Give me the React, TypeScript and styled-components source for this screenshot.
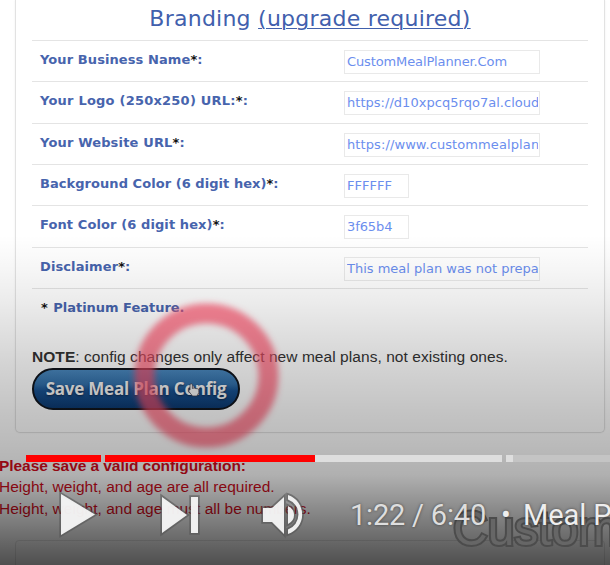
import React from 'react';
import styled, { createGlobalStyle } from 'styled-components';

const Global = createGlobalStyle`
  * { box-sizing: border-box; }
  body { margin: 0; background: #fff; overflow: hidden; }
`;

const Stage = styled.div`
  position: relative;
  width: 610px;
  height: 565px;
  overflow: hidden;
  background: #fff;
  font-family: "DejaVu Sans", Verdana, sans-serif;
  white-space: nowrap;
`;

const Page = styled.main`
  display: flex;
  flex-direction: column;
  width: 610px;
  height: 565px;
`;

const Panel = styled.section`
  height: 433px;
  width: 590px;
  margin-left: 15px;
  padding: 0 16px;
  border: 1px solid #e2e2e2;
  border-top: 0;
  border-radius: 0 0 5px 5px;
  box-shadow: 0 0 2px #ececec;
  flex: none;
`;

const Heading = styled.h1`
  margin: 0;
  height: 40px;
  padding-top: 5px;
  text-align: center;
  font-size: 22px;
  line-height: 28px;
  font-weight: 400;
  letter-spacing: 0.24px;
  color: #4160ad;
`;

const Upgrade = styled.a`
  color: inherit;
  text-decoration: underline;
  text-decoration-thickness: 1px;
  text-underline-offset: 2px;
`;

const Row = styled.div`
  display: grid;
  grid-template-columns: 312px 1fr;
  height: 41.33px;
  border-top: 1px solid #e4e4e4;
`;

const Label = styled.label<{ $spacing: number }>`
  padding: 9px 0 0 8px;
  font-size: 13px;
  line-height: 19px;
  font-weight: 700;
  letter-spacing: ${(p) => p.$spacing}px;
  color: #4764ad;
`;

const Star = styled.span<{ $lead?: boolean }>`
  color: #111;
  margin: ${(p) => (p.$lead ? '0 1px 0 1px' : '0')};
`;

const Field = styled.div<{ $small?: boolean; $spacing: number }>`
  width: ${(p) => (p.$small ? 65 : 196)}px;
  height: 24px;
  margin-top: 9px;
  padding: 0 1px 0 2px;
  border: 1px solid #e9e9e9;
  font-size: 13px;
  line-height: 22px;
  letter-spacing: ${(p) => p.$spacing}px;
  color: #6b8eee;
`;

const FieldText = styled.span`
  display: block;
  overflow: hidden;
`;

const Note = styled.p`
  margin: 19px 0 0;
  font: 15.5px/18px "Liberation Sans", Arial, sans-serif;
  letter-spacing: 0.06px;
  color: #333;
`;

const SaveButton = styled.button`
  display: block;
  width: 208px;
  height: 42px;
  margin: 2px 0 0;
  padding: 0 0 1px;
  border: 2px solid #10151d;
  border-radius: 21px;
  background: linear-gradient(#4a88be 0, #326fa9 38%, #185190 55%, #0c3a71 100%);
  color: #f4f4f4;
  font: 700 17px "Open Sans", sans-serif;
  letter-spacing: -0.22px;
  white-space: nowrap;
  text-shadow: 0 1px 2px #12284a;
`;

const Errors = styled.div`
  margin-top: 21.5px;
  margin-left: -1px;
  font: 15.5px/21.5px "Liberation Sans", Arial, sans-serif;
  color: #d20c1c;
`;

const ErrorTitle = styled.strong`
  display: block;
  letter-spacing: -0.06px;
`;

const ErrorLine = styled.div`
  letter-spacing: 0.02px;
`;

const LowerPanel = styled.section`
  flex: none;
  width: 590px;
  height: 60px;
  margin: 21px 0 0 15px;
  border: 1px solid #e6e6e6;
  border-radius: 4px;
`;

const Layer = styled.svg`
  position: absolute;
  inset: 0;
  pointer-events: none;
`;

const Shade = styled.div`
  position: absolute;
  inset: 0;
  background: linear-gradient(
    rgba(0, 0, 0, 0) 235px,
    rgba(0, 0, 0, 0.03) 265px,
    rgba(0, 0, 0, 0.075) 300px,
    rgba(0, 0, 0, 0.16) 357px,
    rgba(0, 0, 0, 0.23) 410px,
    rgba(0, 0, 0, 0.27) 445px,
    rgba(0, 0, 0, 0.31) 475px,
    rgba(0, 0, 0, 0.43) 503px,
    rgba(0, 0, 0, 0.58) 538px,
    rgba(0, 0, 0, 0.69) 565px
  );
`;

const Watermark = styled.div`
  position: absolute;
  left: 453px;
  top: 502px;
  font: 400 48px/54px "Liberation Sans", Arial, sans-serif;
  color: #666;
  -webkit-text-stroke: 4px #4c4c4c;
  paint-order: stroke fill;
  filter: blur(0.5px);
`;

const Player = styled.div`
  position: absolute;
  left: 0;
  right: 0;
  bottom: 0;
  height: 110px;
`;

const Progress = styled.div`
  display: flex;
  height: 8px;
  padding-left: 26px;
`;

const Chapter = styled.div<{ $width: number; $fill: string; $gap?: number }>`
  flex: none;
  width: ${(p) => p.$width}px;
  height: 7px;
  margin-right: ${(p) => p.$gap ?? 0}px;
  background: ${(p) => p.$fill};
`;

const Controls = styled.div`
  display: flex;
  align-items: center;
  height: 104px;
`;

const Icons = styled.svg`
  flex: none;
  width: 350px;
  height: 104px;
`;

const PlayerText = styled.span<{ $width: number; $bright?: boolean; $spacing: number }>`
  flex: none;
  width: ${(p) => p.$width}px;
  font: 400 29px/36px Roboto, sans-serif;
  letter-spacing: ${(p) => p.$spacing}px;
  color: ${(p) => (p.$bright ? '#eee' : '#dedede')};
  text-shadow: 0 0 3px rgba(0, 0, 0, 0.5);
`;

const fields = [
  { label: 'Your Business Name', ls: 0.09, value: 'CustomMealPlanner.Com', vs: -0.12 },
  { label: 'Your Logo (250x250) URL:', ls: 0.22, value: 'https://d10xpcq5rqo7al.cloudfront', vs: 0.03 },
  { label: 'Your Website URL', ls: 0.16, value: 'https://www.custommealplanner', vs: 0.1 },
  { label: 'Background Color (6 digit hex)', ls: 0.05, value: 'FFFFFF', vs: 0, small: true },
  { label: 'Font Color (6 digit hex)', ls: 0.1, value: '3f65b4', vs: -0.1, small: true },
  { label: 'Disclaimer', ls: 0.1, value: 'This meal plan was not prepared', vs: 0 },
];

export default function App() {
  return (
    <Stage>
      <Global />
      <Page>
        <Panel>
          <Heading>
            Branding <Upgrade>(upgrade required)</Upgrade>
          </Heading>
          {fields.map((f) => (
            <Row key={f.label}>
              <Label $spacing={f.ls}>
                {f.label}
                <Star>*</Star>:
              </Label>
              <Field $small={f.small} $spacing={f.vs}>
                <FieldText>{f.value}</FieldText>
              </Field>
            </Row>
          ))}
          <Row>
            <Label $spacing={-0.02}>
              <Star $lead>*</Star> Platinum Feature.
            </Label>
          </Row>
          <Note>
            <b>NOTE</b>: config changes only affect new meal plans, not existing ones.
          </Note>
          <SaveButton>Save Meal Plan Config</SaveButton>
        </Panel>
        <Errors>
          <ErrorTitle>Please save a valid configuration:</ErrorTitle>
          <ErrorLine>Height, weight, and age are all required.</ErrorLine>
          <ErrorLine>Height, weight, and age must all be numbers.</ErrorLine>
        </Errors>
        <LowerPanel />
      </Page>
      <Layer width="610" height="565">
        <defs>
          <filter id="soft" x="-20%" y="-20%" width="140%" height="140%">
            <feGaussianBlur stdDeviation="3.2" />
          </filter>
        </defs>
        <circle cx="206.500" cy="375.500" r="62" fill="none" stroke="#ff4d68" strokeOpacity="0.68" strokeWidth="20" filter="url(#soft)" />
        <path
          d="M190 390v-5q0-1.300 1.200-1.300t1.200 1.300v3.500l1.700-.6 1.600.7 1.600 0 1.500 1v3l-1.800 3.400h-4.500l-4-5q0-1.800 1.500-1z"
          fill="#f5f5f5"
          stroke="#334"
          strokeWidth="0.7"
        />
      </Layer>
      <Shade />
      <Watermark>Custom</Watermark>
      <Player>
        <Progress>
          <Chapter $width={75} $fill="#f00" $gap={4} />
          <Chapter $width={210} $fill="#f00" />
          <Chapter $width={187} $fill="#dedede" $gap={4} />
          <Chapter $width={7} $fill="#dedede" />
          <Chapter $width={110} $fill="#c4c4c4" />
        </Progress>
        <Controls>
          <Icons viewBox="0 463 350 104">
            <g fill="#f4f4f4" fillOpacity="0.97" stroke="#555" strokeOpacity="0.6" strokeWidth="3.500" paintOrder="stroke">
              <path d="M61 494v41l34-20.500z" />
              <path d="M162 497v36l25-18zM191 497h7v36h-7z" />
              <path d="M263 508v14h9l12 12v-37l-12 11z" />
              <path d="M288 506q6 3 6 9t-6 9z" />
              <path d="M288 495a20.500 20.500 0 0 1 0 39v-4.500a16 16 0 0 0 0-30z" />
            </g>
          </Icons>
          <PlayerText $width={151} $spacing={-0.2}>1:22 / 6:40</PlayerText>
          <PlayerText $width={22} $bright $spacing={0}>•</PlayerText>
          <PlayerText $width={150} $bright $spacing={-0.1}>Meal Plan</PlayerText>
        </Controls>
      </Player>
    </Stage>
  );
}
